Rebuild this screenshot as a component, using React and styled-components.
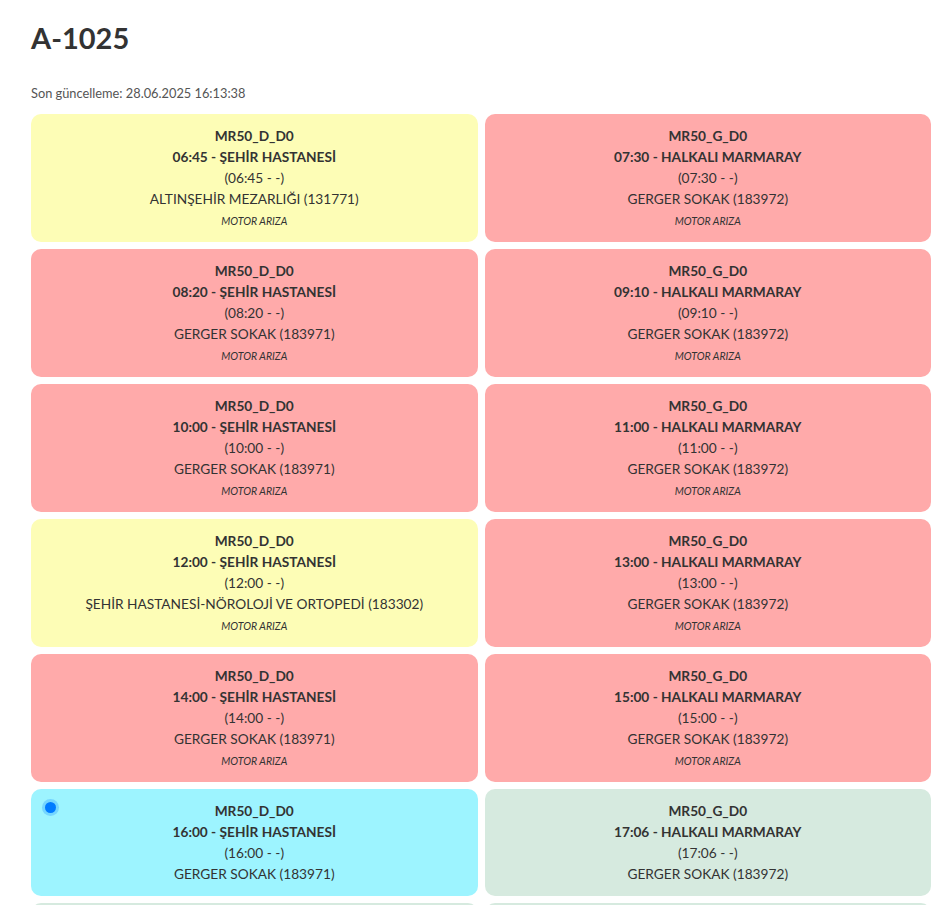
import React from "react";
import styled, { createGlobalStyle } from "styled-components";

const GlobalStyle = createGlobalStyle`
  body {
    margin: 0;
    background: #fff;
    font-family: Lato, "Noto Sans", sans-serif;
    color: #333;
  }
`;

const trips = [
  { route: "MR50_D_D0", time: "06:45", dest: "ŞEHİR HASTANESİ", stop: "ALTINŞEHİR MEZARLIĞI (131771)", note: "MOTOR ARIZA", tone: "yellow" },
  { route: "MR50_G_D0", time: "07:30", dest: "HALKALI MARMARAY", stop: "GERGER SOKAK (183972)", note: "MOTOR ARIZA", tone: "red" },
  { route: "MR50_D_D0", time: "08:20", dest: "ŞEHİR HASTANESİ", stop: "GERGER SOKAK (183971)", note: "MOTOR ARIZA", tone: "red" },
  { route: "MR50_G_D0", time: "09:10", dest: "HALKALI MARMARAY", stop: "GERGER SOKAK (183972)", note: "MOTOR ARIZA", tone: "red" },
  { route: "MR50_D_D0", time: "10:00", dest: "ŞEHİR HASTANESİ", stop: "GERGER SOKAK (183971)", note: "MOTOR ARIZA", tone: "red" },
  { route: "MR50_G_D0", time: "11:00", dest: "HALKALI MARMARAY", stop: "GERGER SOKAK (183972)", note: "MOTOR ARIZA", tone: "red" },
  { route: "MR50_D_D0", time: "12:00", dest: "ŞEHİR HASTANESİ", stop: "ŞEHİR HASTANESİ-NÖROLOJİ VE ORTOPEDİ (183302)", note: "MOTOR ARIZA", tone: "yellow" },
  { route: "MR50_G_D0", time: "13:00", dest: "HALKALI MARMARAY", stop: "GERGER SOKAK (183972)", note: "MOTOR ARIZA", tone: "red" },
  { route: "MR50_D_D0", time: "14:00", dest: "ŞEHİR HASTANESİ", stop: "GERGER SOKAK (183971)", note: "MOTOR ARIZA", tone: "red" },
  { route: "MR50_G_D0", time: "15:00", dest: "HALKALI MARMARAY", stop: "GERGER SOKAK (183972)", note: "MOTOR ARIZA", tone: "red" },
  { route: "MR50_D_D0", time: "16:00", dest: "ŞEHİR HASTANESİ", stop: "GERGER SOKAK (183971)", tone: "cyan", active: true },
  { route: "MR50_G_D0", time: "17:06", dest: "HALKALI MARMARAY", stop: "GERGER SOKAK (183972)", tone: "green" },
  { route: "MR50_D_D0", time: "18:00", dest: "ŞEHİR HASTANESİ", stop: "GERGER SOKAK (183971)", tone: "green" },
  { route: "MR50_G_D0", time: "19:00", dest: "HALKALI MARMARAY", stop: "GERGER SOKAK (183972)", tone: "green" },
];

const tones = {
  yellow: "#fdfdb6",
  red: "#ffaaaa",
  cyan: "#9df4ff",
  green: "#d6eadf",
};

const App = () => (
  <Page>
    <GlobalStyle />
    <Title>A-1025</Title>
    <Updated>Son güncelleme: 28.06.2025 16:13:38</Updated>
    <Grid>
      {trips.map((t, i) => (
        <Card key={i} tone={t.tone}>
          {t.active && <Dot />}
          <Bold>{t.route}</Bold>
          <Bold>
            {t.time} - {t.dest}
          </Bold>
          <Line>({t.time} - -)</Line>
          <Line>{t.stop}</Line>
          {t.note && <Note>{t.note}</Note>}
        </Card>
      ))}
    </Grid>
  </Page>
);

export default App;

const Page = styled.div`
  width: 900px;
  padding: 0 31px;
`;

const Title = styled.h1`
  margin: 0;
  padding-top: 21px;
  font-size: 29px;
  line-height: 34px;
  font-weight: 700;
  color: #333;
`;

const Updated = styled.div`
  margin-top: 29px;
  font-size: 12.8px;
  line-height: 18px;
  color: #555;
`;

const Grid = styled.div`
  display: grid;
  grid-template-columns: 1fr 1fr;
  gap: 7px;
  margin-top: 12px;
`;

const Card = styled.div`
  position: relative;
  background: ${(p) => tones[p.tone]};
  border-radius: 10px;
  padding: 11px 10px 12px;
  text-align: center;
  font-size: 13.7px;
  line-height: 21px;
  color: #333;
`;

const Bold = styled.div`
  font-weight: 700;
`;

const Line = styled.div``;

const Note = styled.div`
  margin-top: 3px;
  font-size: 10.5px;
  font-style: italic;
  line-height: 18px;
`;

const Dot = styled.span`
  position: absolute;
  left: 14px;
  top: 13px;
  width: 11px;
  height: 11px;
  border-radius: 50%;
  background: #007bff;
  box-shadow: 0 0 0 3px rgba(0, 123, 255, 0.25);
`;
